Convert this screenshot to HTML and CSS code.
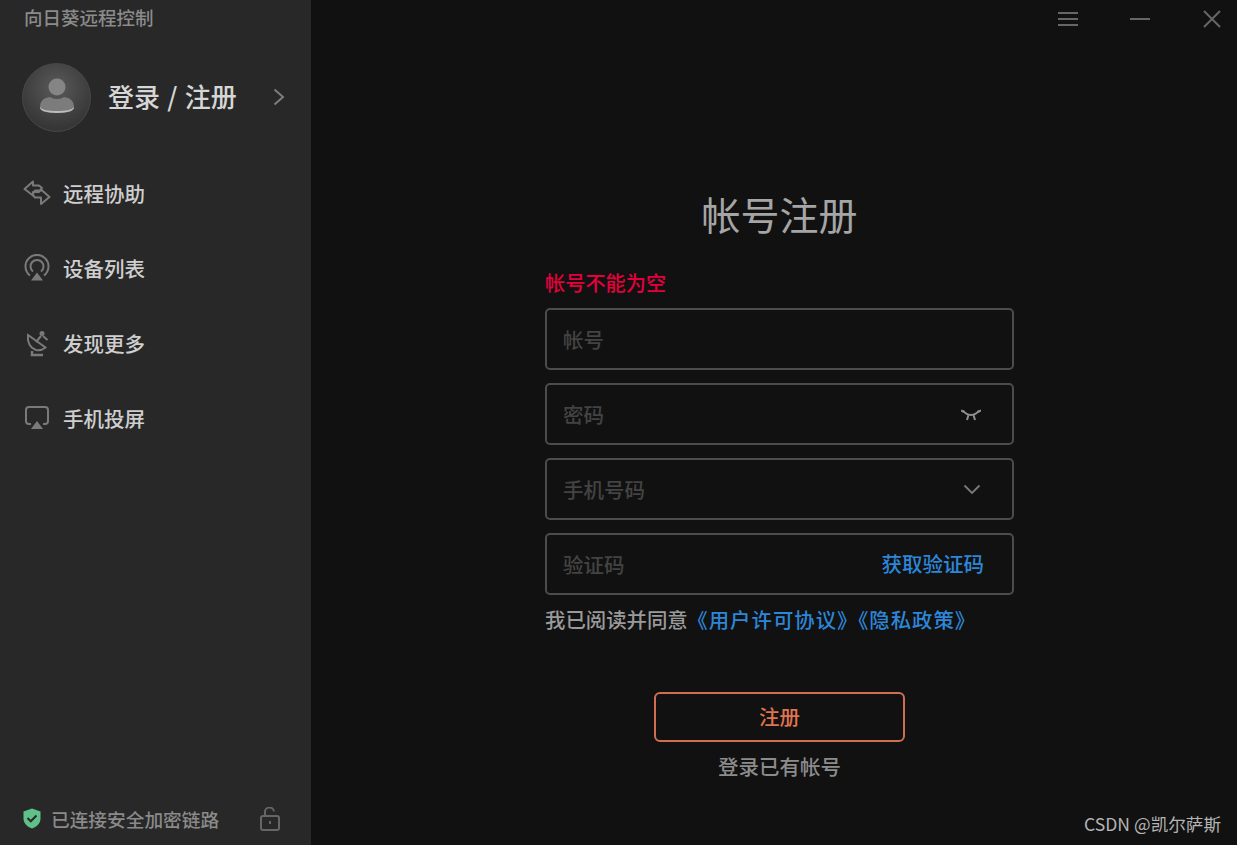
FILE: index.html
```html
<!DOCTYPE html>
<html lang="zh-CN">
<head>
<meta charset="utf-8">
<title>向日葵远程控制</title>
<link rel="stylesheet" href="styles.css">
</head>
<body>
<div class="app">
  <aside class="sidebar">
    <div class="app-title">向日葵远程控制</div>
    <div class="account">
      <div class="avatar">
        <svg class="avatar-person" width="34" height="36" viewBox="0 0 34 36"><circle cx="17" cy="9" r="8.500" fill="#858585"/><path d="M0 30c0-8 4-10 10-11 2 1 4 2 7 2s5-1 7-2c6 1 10 3 10 11 0 3-7 5-17 5S0 33 0 30z" fill="#7c7c7c"/><path d="M.2 29c1.500 3 8 4 16.800 4s15.300-1 16.800-4c.8 4-6 6-16.800 6S-.6 33 .2 29z" fill="#bdbdbd"/></svg>
      </div>
      <span class="account-name">登录 / 注册</span>
      <svg class="account-arrow" width="12" height="18" viewBox="0 0 12 18"><path d="M1.500 1.500 10 9l-8.500 7.500" fill="none" stroke="#7d7d7d" stroke-width="2"/></svg>
    </div>
    <nav class="nav">
      <div class="nav-item">
        <svg width="28" height="26" viewBox="0 0 28 26" fill="none" stroke="#7a7a7a" stroke-width="2" stroke-linejoin="round"><path d="M10 1.500 1.500 9l8.500 6.500v-3.500h6l3-4-3-2.500h-6z"/><path d="M18 10.500h-6l-2.500 4 2.500 3h6V24l8.500-7-8.500-7.500z"/></svg>
        <span>远程协助</span>
      </div>
      <div class="nav-item">
        <svg width="28" height="28" viewBox="0 0 28 28" fill="none" stroke="#7a7a7a" stroke-width="2"><path d="M7 21.500a11.500 11.500 0 1 1 14 0"/><path d="M10 17.500a6.500 6.500 0 1 1 8 0"/><path d="M14 18.500l6 8H8z" fill="#7a7a7a" stroke="none"/></svg>
        <span>设备列表</span>
      </div>
      <div class="nav-item">
        <svg width="28" height="28" viewBox="0 0 28 28" fill="none" stroke="#7a7a7a" stroke-width="2"><path d="M5 6c-1 7 2 13 8 15 4 1 7-.5 9.500-2.500z"/><path d="M13 13l5-6"/><circle cx="19" cy="4.500" r="2.500" fill="#7a7a7a" stroke="none"/><path d="M20 7l4.500 4"/><path d="M9 22v4h11" stroke-width="2.500"/></svg>
        <span>发现更多</span>
      </div>
      <div class="nav-item">
        <svg width="28" height="26" viewBox="0 0 28 26" fill="none" stroke="#7a7a7a" stroke-width="2"><path d="M8 19H6a3 3 0 0 1-3-3V5a3 3 0 0 1 3-3h16a3 3 0 0 1 3 3v11a3 3 0 0 1-3 3h-2"/><path d="M14 16l6 8H8z" fill="#7a7a7a" stroke="none"/></svg>
        <span>手机投屏</span>
      </div>
    </nav>
    <div class="secure">
      <svg width="20" height="21" viewBox="0 0 20 21"><path d="M10 .5 18.500 3.500v7c0 5-4 8.500-8.500 10-4.500-1.500-8.500-5-8.500-10v-7z" fill="#5fc089"/><path d="M5.500 10l3.300 3.300 5.700-5.800" fill="none" stroke="#282828" stroke-width="2"/></svg>
      <span class="secure-text">已连接安全加密链路</span>
      <svg class="secure-lock" width="20" height="24" viewBox="0 0 20 24" fill="none" stroke="#666" stroke-width="2"><rect x="1" y="9" width="18" height="14" rx="2"/><path d="M5 9V5.500a4.500 4.500 0 0 1 9-1"/><path d="M10 14v3"/></svg>
    </div>
  </aside>
  <main class="main">
    <div class="window-controls">
      <svg width="20" height="14" viewBox="0 0 20 14" fill="#666"><rect y="0" width="20" height="2"/><rect y="6" width="20" height="2"/><rect y="12" width="20" height="2"/></svg>
      <svg width="20" height="2" viewBox="0 0 20 2" fill="#666"><rect width="20" height="2"/></svg>
      <svg width="20" height="20" viewBox="0 0 20 20" fill="none" stroke="#666" stroke-width="2"><path d="M2 2l16 16M18 2 2 18"/></svg>
    </div>
    <div class="form">
      <h1 class="form-title">帐号注册</h1>
      <div class="form-error">帐号不能为空</div>
      <div class="fields">
        <div class="field"><span class="placeholder">帐号</span></div>
        <div class="field"><span class="placeholder">密码</span>
          <svg width="20" height="13" viewBox="0 0 20 13" fill="none" stroke="#8f8f8f" stroke-width="2"><path d="M2 2.500c2.500 3.500 5 4.500 8 4.500s5.500-1 8-4.500"/><path d="M0 2.500l3 1.500M20 2.500l-3 1.500M6 12l1.500-5M14 12l-1.500-5"/></svg>
        </div>
        <div class="field"><span class="placeholder">手机号码</span>
          <svg width="18" height="11" viewBox="0 0 18 11" fill="none" stroke="#7a7a7a" stroke-width="1.800"><path d="M1.500 1.500 9 9l7.500-7.500"/></svg>
        </div>
        <div class="field field-code"><span class="placeholder">验证码</span><span class="link link-code">获取验证码</span></div>
      </div>
      <div class="agreement">我已阅读并同意<span class="link link-first">《用户许可协议》</span><span class="link link-second">《隐私政策》</span></div>
      <div class="submit">注册</div>
      <div class="login-link">登录已有帐号</div>
    </div>
  </main>
</div>
<div class="watermark">CSDN @凯尔萨斯</div>
</body>
</html>
```
FILE: styles.css
```css
* { box-sizing: border-box; }
html, body { margin: 0; height: 100%; }
body {
  background: #111;
  font-family: "Noto Sans CJK SC", "Liberation Sans", sans-serif;
  overflow: hidden;
}
.app { display: flex; height: 845px; width: 1237px; }

.sidebar {
  width: 311px;
  flex: none;
  background: #282828;
  display: flex;
  flex-direction: column;
}
.app-title {
  margin: 4px 0 0 24px;
  height: 27px;
  line-height: 27px;
  font-size: 18.500px;
  font-weight: 500;
  color: #8b8b8b;
}
.account {
  display: flex;
  align-items: center;
  margin: 32px 0 0 22px;
  height: 69px;
}
.avatar {
  width: 69px;
  height: 69px;
  border-radius: 50%;
  border: 1px solid #484848;
  background: radial-gradient(circle at 50% 35%, #5a5a5a, #363636 75%);
  display: flex;
  align-items: center;
  justify-content: center;
  flex: none;
}
.avatar-person { margin-top: -3px; }
.account-name {
  margin-left: 17px;
  font-size: 26px;
  font-weight: 500;
  line-height: 36px;
  margin-top: -3px;
  color: #d6d6d6;
  white-space: nowrap;
  width: 165px;
  word-spacing: 1.500px;
}
.account-arrow { flex: none; margin-top: -1px; }
.nav {
  display: flex;
  flex-direction: column;
  margin-top: 47px;
  gap: 47px;
}
.nav-item {
  display: flex;
  align-items: center;
  height: 28px;
  padding-left: 23px;
  font-size: 20.500px;
  font-weight: 500;
  color: #cfcfcf;
}
.nav-item svg { width: 28px; flex: none; }
.nav-item span { margin-left: 12px; line-height: 28px; margin-top: -1px; white-space: nowrap; }
.secure {
  margin-top: auto;
  height: 26px;
  margin-bottom: 14px;
  display: flex;
  align-items: center;
  padding-left: 22px;
}
.secure-text {
  margin-left: 9px;
  font-size: 18.700px;
  font-weight: 500;
  color: #8a8a8a;
  white-space: nowrap;
  width: 209px;
}
.secure-lock { flex: none; margin-top: 2px; }

.main {
  flex: 1;
  display: flex;
  flex-direction: column;
  align-items: center;
}
.window-controls {
  align-self: stretch;
  height: 38px;
  display: flex;
  align-items: center;
  justify-content: flex-end;
  gap: 52px;
  padding-right: 15px;
}
.form { width: 469px; display: flex; flex-direction: column; margin-left: 11px; }
.form-title {
  margin: 146px 0 0;
  height: 58px;
  line-height: 58px;
  text-align: center;
  font-size: 39px;
  font-weight: 400;
  color: #a5a5a5;
}
.form-error {
  margin-top: 27px;
  height: 28px;
  line-height: 28px;
  font-size: 20.200px;
  font-weight: 500;
  color: #e3003c;
}
.fields {
  margin-top: 11px;
  display: flex;
  flex-direction: column;
  gap: 13px;
}
.field {
  height: 62px;
  border: 2px solid #4c4c4c;
  border-radius: 5px;
  padding: 0 31px 0 16px;
  display: flex;
  align-items: center;
  justify-content: space-between;
}
.field-code { padding-right: 28px; }
.placeholder { font-size: 20.500px; font-weight: 500; color: #434343; }
.link { color: #2d86d8; font-weight: 500; }
.link-code { font-size: 20.500px; margin-top: -2px; }
.link-first { margin-left: -0.400px; letter-spacing: 1px; }
.link-second { margin-left: -0.400px; letter-spacing: 1px; }
.agreement {
  margin-top: 9px;
  height: 30px;
  line-height: 30px;
  font-size: 20.400px;
  font-weight: 500;
  color: #9a9a9a;
  white-space: nowrap;
}
.submit {
  margin: 58px auto 0;
  width: 251px;
  height: 50px;
  line-height: 45px;
  border: 2px solid #cf6f4f;
  border-radius: 6px;
  text-align: center;
  font-size: 20.500px;
  font-weight: 500;
  color: #e0744f;
}
.login-link {
  margin-top: 9px;
  height: 30px;
  line-height: 30px;
  text-align: center;
  font-size: 20.500px;
  font-weight: 500;
  color: #8c8c8c;
}
.watermark {
  position: absolute;
  left: 1084px;
  top: 811px;
  font-size: 17.600px;
  line-height: 26px;
  color: #b4b4b4;
  white-space: nowrap;
}
```
